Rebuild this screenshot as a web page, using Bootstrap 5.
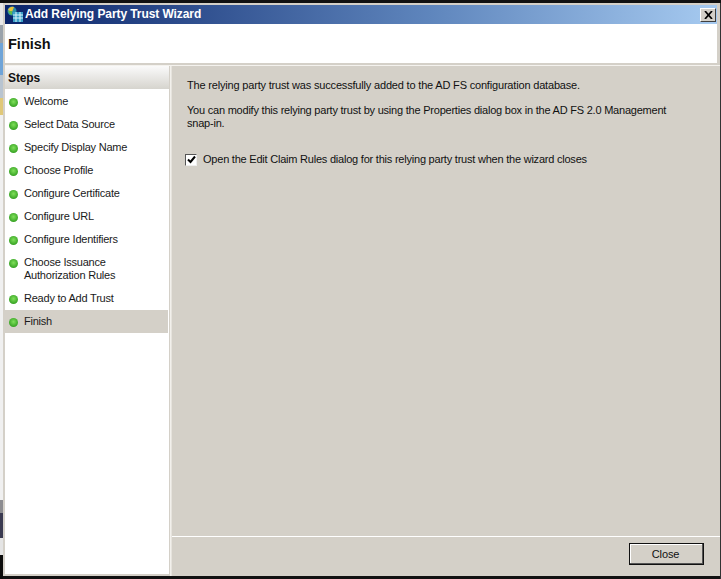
<!DOCTYPE html>
<html><head><meta charset="utf-8"><title>Wizard</title>
<link href="https://cdn.jsdelivr.net/npm/bootstrap@5.3.0/dist/css/bootstrap.min.css" rel="stylesheet">
<style>
html,body{height:579px;overflow:hidden;background:#111}
body{font-family:"Liberation Sans",Arial,sans-serif;font-size:11px;color:#111;line-height:13px;padding-top:3px}
.wiz-strip{width:3px;flex:none;background:linear-gradient(#e8e8e8 0 22px,#9aa2aa 22px 40px,#6fa4d8 40px 72px,#b8c4d0 72px 95px,#e0c878 95px 112px,#f0f0f0 112px 497px,#8c8c90 497px 510px,#3a3a50 510px 535px,#e4e4e4 535px 552px,#0c0c0c 552px)}
.wiz-win{width:717px;height:573px;background:#d4d0c8;padding:2px 0 0 2px;flex:none}
.wiz-right{flex:1;background:#333}
.wiz-title{height:19px;background:linear-gradient(90deg,#0a246a,#5f86bd 60%,#a6caf0);padding:0 1px 0 2px;flex:none;margin-right:3px}
.wiz-title-text{font:bold 12px "Liberation Sans",sans-serif;color:#fff;letter-spacing:-.08px;margin-left:1px;line-height:19px}
.wiz-x{width:16px;height:14px;background:#d4d0c8;border:1px solid;border-color:#fff #404040 #404040 #fff;display:flex;padding:0;margin-left:auto}
.wiz-head{height:39px;background:#fff;padding:0 3px;font:bold 14.5px "Liberation Sans",sans-serif;color:#101010;flex:none;margin-right:3px}
.wiz-rule{height:3px;background:linear-gradient(#d4d0c8 0 2px,#f4f2ee 2px);flex:none}
.wiz-body{flex:1;min-height:0}
.wiz-side{width:164px;background:#fff;flex:none;margin-bottom:2px}
.wiz-gap{width:3px;flex:none;background:linear-gradient(90deg,#d4d0c8 0 1px,#f2f0ec 1px 2px,#e6e3dd 2px)}
.wiz-steps-h{height:23px;margin-bottom:1px;background:linear-gradient(#fafafa,#d6d4ce);font-weight:bold;padding-left:3px;line-height:25px;font-size:12px;letter-spacing:-.1px}
.wiz-step{padding:5px 0 5px 4px;display:flex;gap:6px;align-items:flex-start;color:#1a1a1a;letter-spacing:-.22px}
.wiz-step.now{background:#d4d0c8;margin-right:1px}
.wiz-dot{width:9px;height:9px;border-radius:50%;flex:none;margin-top:3px;background:radial-gradient(circle at 50% 42%,#7fe05a,#3aa526 70%,#2f8a2a)}
.wiz-main{flex:1;min-width:0;background:#d4d0c8}
.wiz-content{flex:1;padding:13px 16px 0 15px;letter-spacing:-.18px}
.wiz-content p{margin:0 0 12px}
.wiz-content p.wiz-tight,.wiz-check{letter-spacing:-.22px}
.wiz-check{display:flex;gap:6px;align-items:center;margin-top:23px;margin-left:-2px}
.wiz-box{width:12px;height:12px;background:#fff;border:1px solid;border-color:#555 #eee #eee #555;display:flex;flex:none;padding:0}
.wiz-foot{height:40px;border-top:1px solid #fff;padding:6px 16px 0 0;flex:none}
.wiz-close{width:75px;height:22px;background:#d4d0c8;border:1px solid #111;box-shadow:inset -1px -1px 0 #555,inset 1px 1px 0 #fff;font:11px "Liberation Sans",sans-serif;color:#111;padding:0 2px 0 0;letter-spacing:-.1px}
</style></head>
<body>
<div class="d-flex" style="height:576px">
  <div class="wiz-strip"></div>
  <div class="wiz-win d-flex flex-column">
    <div class="wiz-title d-flex align-items-center">
      <svg width="17" height="17" viewBox="0 0 17 17"><circle cx="5" cy="5" r="4.5" fill="#2f8fa8"/><path d="M1 4 Q3 0 7 1 L5 6Z" fill="#e8c23a"/><path d="M1 5 L5 5 L5 9 Q2 8 1 5Z" fill="#5fb94a"/><rect x="6" y="6" width="10" height="10" fill="#3aa0c8"/><path d="M6 9h10M6 12h10M9 6v10M13 6v10" stroke="#d8f2fa" stroke-width="1"/></svg>
      <span class="wiz-title-text">Add Relying Party Trust Wizard</span>
      <button class="wiz-x align-items-center justify-content-center" aria-label="Close"><svg width="9" height="8" viewBox="0 0 9 8"><path d="M1 0l7 8M8 0L1 8" stroke="#000" stroke-width="1.7"/></svg></button>
    </div>
    <div class="wiz-head d-flex align-items-center">Finish</div>
    <div class="wiz-rule"></div>
    <div class="wiz-body d-flex">
      <div class="wiz-side">
        <div class="wiz-steps-h">Steps</div>
        <div class="wiz-step"><i class="wiz-dot"></i><span>Welcome</span></div>
        <div class="wiz-step"><i class="wiz-dot"></i><span>Select Data Source</span></div>
        <div class="wiz-step"><i class="wiz-dot"></i><span>Specify Display Name</span></div>
        <div class="wiz-step"><i class="wiz-dot"></i><span>Choose Profile</span></div>
        <div class="wiz-step"><i class="wiz-dot"></i><span>Configure Certificate</span></div>
        <div class="wiz-step"><i class="wiz-dot"></i><span>Configure URL</span></div>
        <div class="wiz-step"><i class="wiz-dot"></i><span>Configure Identifiers</span></div>
        <div class="wiz-step"><i class="wiz-dot"></i><span>Choose Issuance<br>Authorization Rules</span></div>
        <div class="wiz-step"><i class="wiz-dot"></i><span>Ready to Add Trust</span></div>
        <div class="wiz-step now"><i class="wiz-dot"></i><span>Finish</span></div>
      </div>
      <div class="wiz-gap"></div>
      <div class="wiz-main d-flex flex-column">
        <div class="wiz-content">
          <p>The relying party trust was successfully added to the AD FS configuration database.</p>
          <p class="wiz-tight">You can modify this relying party trust by using the Properties dialog box in the AD FS 2.0 Management<br>snap-in.</p>
          <div class="wiz-check"><span class="wiz-box align-items-center justify-content-center"><svg width="9" height="9" viewBox="0 0 9 9"><path d="M1 4.5l2.5 2.5L8 1.5" fill="none" stroke="#000" stroke-width="2"/></svg></span><span>Open the Edit Claim Rules dialog for this relying party trust when the wizard closes</span></div>
        </div>
        <div class="wiz-foot d-flex align-items-start justify-content-end"><button class="wiz-close">Close</button></div>
      </div>
    </div>
  </div>
  <div class="wiz-right"></div>
</div>
</body></html>
